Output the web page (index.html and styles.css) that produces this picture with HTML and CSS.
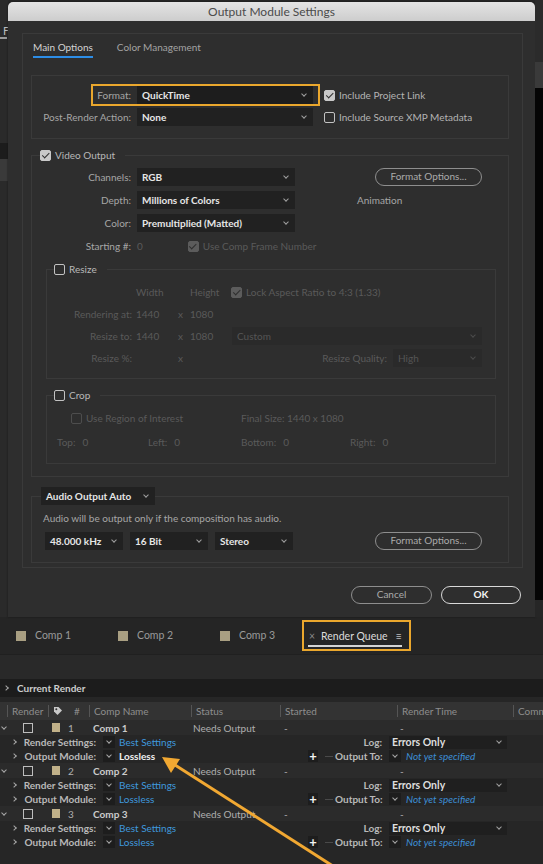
FILE: index.html
```html
<!DOCTYPE html>
<html lang="en">
<head>
    <meta charset="UTF-8">
    <meta name="viewport" content="width=device-width, initial-scale=1.0">
    <title>Output Module Settings</title>
    <link rel="stylesheet" href="styles.css">
</head>
<body>
    <div class="top">
        <div class="edge-left">
            <span class="frag-f">F</span>
            <span class="frag-block"></span>
            <span class="frag-block light"></span>
        </div>

        <div class="dialog">
            <div class="titlebar">Output Module Settings</div>
            <div class="dialog-body">
                <div class="panel">
                    <div class="tabs">
                        <span class="tab active">Main Options</span>
                        <span class="tab">Color Management</span>
                    </div>

                    <!-- format -->
                    <div class="box box-format">
                        <div class="hl"></div>
                        <div class="frow">
                            <span class="lbl">Format:</span>
                            <div class="select dark">QuickTime</div>
                            <span class="opt"><span class="cb on"></span>Include Project Link</span>
                        </div>
                        <div class="frow">
                            <span class="lbl">Post-Render Action:</span>
                            <div class="select">None</div>
                            <span class="opt"><span class="cb"></span>Include Source XMP Metadata</span>
                        </div>
                    </div>

                    <!-- video -->
                    <fieldset class="group group-video">
                        <legend><span class="cb on"></span>Video Output</legend>
                        <div class="vid-top">
                            <div class="vid-rows">
                                <div class="vrow">
                                    <span class="lbl">Channels:</span>
                                    <div class="select">RGB</div>
                                </div>
                                <div class="vrow">
                                    <span class="lbl">Depth:</span>
                                    <div class="select">Millions of Colors</div>
                                </div>
                                <div class="vrow">
                                    <span class="lbl">Color:</span>
                                    <div class="select">Premultiplied (Matted)</div>
                                </div>
                                <div class="vrow">
                                    <span class="lbl">Starting #:</span>
                                    <div class="start">
                                        <span class="off">0</span>
                                        <span class="opt off comp-frame"><span class="cb on dim"></span>Use Comp Frame Number</span>
                                    </div>
                                </div>
                            </div>
                            <div class="vid-side">
                                <div class="pill fmt">Format Options...</div>
                                <div class="anim">Animation</div>
                            </div>
                        </div>

                        <fieldset class="group group-sub">
                            <legend><span class="cb"></span>Resize</legend>
                            <div class="rgrid">
                                <span></span>
                                <span class="off">Width</span>
                                <span></span>
                                <span class="off">Height</span>
                                <span class="rest"><span class="opt off"><span class="cb on dim"></span>Lock Aspect Ratio to 4:3 (1.33)</span></span>

                                <span class="rlbl off">Rendering at:</span>
                                <span class="off">1440</span>
                                <span class="off">x</span>
                                <span class="off">1080</span>
                                <span class="rest"></span>

                                <span class="rlbl off">Resize to:</span>
                                <span class="off">1440</span>
                                <span class="off">x</span>
                                <span class="off">1080</span>
                                <span class="rest end"><span class="select off w-custom">Custom</span></span>

                                <span class="rlbl off">Resize %:</span>
                                <span></span>
                                <span class="off">x</span>
                                <span></span>
                                <span class="rest end"><span class="off">Resize Quality:</span><span class="select off w-quality">High</span></span>
                            </div>
                        </fieldset>

                        <fieldset class="group group-sub crop">
                            <legend><span class="cb"></span>Crop</legend>
                            <div class="crow1">
                                <span class="opt off"><span class="cb dim"></span>Use Region of Interest</span>
                                <span class="off">Final Size: 1440 x 1080</span>
                            </div>
                            <div class="crow2">
                                <span class="off">Top:<b>0</b></span>
                                <span class="off">Left:<b>0</b></span>
                                <span class="off">Bottom:<b>0</b></span>
                                <span class="off">Right:<b>0</b></span>
                            </div>
                        </fieldset>
                    </fieldset>

                    <!-- audio -->
                    <fieldset class="group group-audio">
                        <legend><span class="select auto">Audio Output Auto</span></legend>
                        <div class="note">Audio will be output only if the composition has audio.</div>
                        <div class="arow">
                            <div class="select w-audio">48.000 kHz</div>
                            <div class="select w-audio">16 Bit</div>
                            <div class="select w-audio">Stereo</div>
                            <div class="pill fmt">Format Options...</div>
                        </div>
                    </fieldset>
                </div>

                <div class="actions">
                    <div class="pill cancel">Cancel</div>
                    <div class="pill ok">OK</div>
                </div>
            </div>
        </div>

        <div class="edge-right"></div>
    </div>

    <!-- render queue panel -->
    <div class="tabbar">
        <span class="ctab"><i class="sw"></i>Comp 1</span>
        <span class="ctab"><i class="sw"></i>Comp 2</span>
        <span class="ctab"><i class="sw"></i>Comp 3</span>
        <span class="rq">
            <span class="rq-inner"><span class="x">×</span>Render Queue<span class="menu">≡</span></span>
        </span>
    </div>
    <div class="tl-empty"></div>
    <div class="current"><i class="tw right"></i>Current Render</div>
    <div class="qhead">
        <span></span>
        <span>Render</span>
        <span class="tagcell">
            <svg class="tag" viewBox="0 0 10 10"><path d="M1 1h4.5l3.5 3.5-4.5 4.5-3.5-3.5z" fill="#c9c9c9"/><circle cx="3.3" cy="3.3" r="1" fill="#333"/></svg>
            <span class="hash">#</span>
        </span>
        <span>Comp Name</span>
        <span>Status</span>
        <span>Started</span>
        <span>Render Time</span>
        <span class="comm">Comm</span>
    </div>

    <div class="queue">
        <div class="qrow comp">
            <span><i class="tw down"></i></span>
            <span><i class="qcb"></i></span>
            <span><i class="sw"></i></span>
            <span>1</span>
            <span class="name">Comp 1</span>
            <span>Needs Output</span>
            <span>-</span>
            <span>-</span>
        </div>
        <div class="qrow sub">
            <span class="twc"><i class="tw right"></i></span>
            <span class="slbl">Render Settings:</span>
            <span class="chevc"><i class="chev-box"></i></span>
            <span class="val link">Best Settings</span>
            <span></span>
            <span class="slbl">Log:</span>
            <span class="ctl"><span class="select qsel">Errors Only</span></span>
        </div>
        <div class="qrow sub">
            <span class="twc"><i class="tw right"></i></span>
            <span class="slbl">Output Module:</span>
            <span class="chevc"><i class="chev-box"></i></span>
            <span class="val hot">Lossless</span>
            <span class="tools"><i class="plus">+</i><i class="minus"></i></span>
            <span class="slbl">Output To:</span>
            <span class="ctl"><i class="chev-box"></i><span class="dest">Not yet specified</span></span>
        </div>

        <div class="qrow comp">
            <span><i class="tw down"></i></span>
            <span><i class="qcb"></i></span>
            <span><i class="sw"></i></span>
            <span>2</span>
            <span class="name">Comp 2</span>
            <span>Needs Output</span>
            <span>-</span>
            <span>-</span>
        </div>
        <div class="qrow sub">
            <span class="twc"><i class="tw right"></i></span>
            <span class="slbl">Render Settings:</span>
            <span class="chevc"><i class="chev-box"></i></span>
            <span class="val link">Best Settings</span>
            <span></span>
            <span class="slbl">Log:</span>
            <span class="ctl"><span class="select qsel">Errors Only</span></span>
        </div>
        <div class="qrow sub">
            <span class="twc"><i class="tw right"></i></span>
            <span class="slbl">Output Module:</span>
            <span class="chevc"><i class="chev-box"></i></span>
            <span class="val link">Lossless</span>
            <span class="tools"><i class="plus">+</i><i class="minus"></i></span>
            <span class="slbl">Output To:</span>
            <span class="ctl"><i class="chev-box"></i><span class="dest">Not yet specified</span></span>
        </div>

        <div class="qrow comp">
            <span><i class="tw down"></i></span>
            <span><i class="qcb"></i></span>
            <span><i class="sw"></i></span>
            <span>3</span>
            <span class="name">Comp 3</span>
            <span>Needs Output</span>
            <span>-</span>
            <span>-</span>
        </div>
        <div class="qrow sub">
            <span class="twc"><i class="tw right"></i></span>
            <span class="slbl">Render Settings:</span>
            <span class="chevc"><i class="chev-box"></i></span>
            <span class="val link">Best Settings</span>
            <span></span>
            <span class="slbl">Log:</span>
            <span class="ctl"><span class="select qsel">Errors Only</span></span>
        </div>
        <div class="qrow sub">
            <span class="twc"><i class="tw right"></i></span>
            <span class="slbl">Output Module:</span>
            <span class="chevc"><i class="chev-box"></i></span>
            <span class="val link">Lossless</span>
            <span class="tools"><i class="plus">+</i><i class="minus"></i></span>
            <span class="slbl">Output To:</span>
            <span class="ctl"><i class="chev-box"></i><span class="dest">Not yet specified</span></span>
        </div>
    </div>

    <!-- callout arrow -->
    <svg class="arrow" viewBox="0 0 543 164" width="543" height="164">
        <line x1="175" y1="65" x2="336" y2="168" stroke="#f1a832" stroke-width="3"/>
        <polygon points="162,57 180,59 171,73" fill="#f1a832"/>
    </svg>
</body>
</html>
```

FILE: styles.css
```css
body {
    margin: 0;
    width: 543px;
    height: 864px;
    overflow: hidden;
    position: relative;
    background: #262626;
    font-family: Lato, "Open Sans", sans-serif;
    font-size: 10px;
    color: #a6a6a6;
}
i { font-style: normal; }

/* top area with the floating dialog */
.top {
    display: flex;
    height: 617px;
}
.edge-left {
    width: 8px;
    background: #2a2a2a;
    display: flex;
    flex-direction: column;
    overflow: hidden;
}
.frag-f {
    margin-top: 24px;
    padding-left: 3px;
    color: #bdbdbd;
    font-size: 11px;
    border-bottom: 2px solid #9a9a9a;
    width: 4px;
}
.frag-block {
    margin-top: 104px;
    height: 16px;
    background: #1c1c1c;
}
.frag-block.light {
    margin-top: 0;
    height: 22px;
    background: #3a3a3a;
}
.edge-right {
    flex: 1;
    background: linear-gradient(#2b2b2b 0 62px, #3a3a3a 62px 88px, #050505 88px 600px, #262626 600px);
}
.dialog {
    width: 527px;
    height: 615px;
    margin-top: 2px;
    background: #2e2e2e;
    border-radius: 5px 5px 0 0;
    display: flex;
    flex-direction: column;
    box-shadow: 0 0 2px #151515;
}
.titlebar {
    height: 19px;
    line-height: 19px;
    background: linear-gradient(#e4e4e4, #cdcdcd);
    border-radius: 5px 5px 0 0;
    color: #4b4b4b;
    font-size: 12px;
    text-align: center;
}
.dialog-body {
    flex: 1;
    padding: 12px 12px 0 14px;
}
.panel {
    border: 1px solid #3a3a3a;
    padding: 0 13px 4px 8px;
}
.tabs {
    padding-top: 7px;
    display: flex;
    gap: 24px;
    line-height: 13px;
}
.tab {
    color: #a3a3a3;
    padding-bottom: 2px;
}
.tab.active {
    margin-left: 2px;
    color: #d4d4d4;
    border-bottom: 2px solid #2d8de6;
}

/* shared controls */
.lbl {
    text-align: right;
    line-height: 18px;
}
.select {
    position: relative;
    display: block;
    height: 18px;
    line-height: 18px;
    box-sizing: border-box;
    padding-left: 5px;
    background: #212121;
    color: #e6e6e6;
    font-weight: 700;
    white-space: nowrap;
}
.select::after {
    content: "";
    position: absolute;
    right: 7px;
    top: 6px;
    width: 3px;
    height: 3px;
    border-right: 1px solid #a0a0a0;
    border-bottom: 1px solid #a0a0a0;
    transform: rotate(45deg);
}
.select.dark { background: #1d1d1d; }
.select.off {
    background: #2a2a2a;
    color: #555;
    font-weight: 400;
}
.select.off::after { border-color: #4c4c4c; }
.off { color: #5a5a5a; }
.opt {
    display: inline-flex;
    align-items: center;
    gap: 4px;
    color: #b4b4b4;
    white-space: nowrap;
}
.opt.off { color: #5a5a5a; }
.cb {
    position: relative;
    display: inline-block;
    width: 11px;
    height: 11px;
    box-sizing: border-box;
    border: 1.5px solid #c2c2c2;
    border-radius: 2px;
    flex: none;
}
.cb.on {
    background: #c9c9c9;
    border-color: #c9c9c9;
}
.cb.on::after {
    content: "";
    position: absolute;
    left: 2.5px;
    top: 0;
    width: 2.5px;
    height: 5.5px;
    border-right: 1.5px solid #303030;
    border-bottom: 1.5px solid #303030;
    transform: rotate(45deg);
}
.cb.dim { border-color: #4d4d4d; }
.cb.dim.on { background: #5c5c5c; border-color: #5c5c5c; }
.cb.dim.on::after { border-color: #2f2f2f; }
.pill {
    height: 18px;
    line-height: 15px;
    box-sizing: border-box;
    border: 1.5px solid #8e8e8e;
    border-radius: 10px;
    text-align: center;
    color: #ababab;
}

/* format box */
.box {
    position: relative;
    margin-top: 17px;
    border: 1px solid #3a3a3a;
    padding: 10px 0 12px;
    display: flex;
    flex-direction: column;
    gap: 4px;
}
.hl {
    position: absolute;
    left: 59px;
    top: 8px;
    width: 229px;
    height: 22px;
    box-sizing: border-box;
    border: 2px solid #eaa72d;
}
.frow {
    display: grid;
    grid-template-columns: 99px 176px auto;
    column-gap: 6px;
    align-items: center;
}
.frow .opt { margin-left: 5px; }

/* groups */
fieldset.group {
    margin: 10px 0 0;
    padding: 0;
    border: 1px solid #3a3a3a;
    min-width: 0;
}
fieldset.group legend {
    margin-left: 8px;
    padding: 0 10px 0 0;
    display: flex;
    align-items: center;
    gap: 4px;
    line-height: 13px;
    color: #b8b8b8;
}
.vid-top {
    display: flex;
    padding-top: 6px;
}
.vid-rows {
    display: flex;
    flex-direction: column;
    gap: 5px;
}
.vrow {
    display: grid;
    grid-template-columns: 99px 158px;
    column-gap: 6px;
    align-items: center;
}
.start {
    display: flex;
    align-items: center;
    line-height: 18px;
}
.comp-frame { margin-left: 45px; }
.vid-side {
    margin-left: 62px;
    display: flex;
    flex-direction: column;
}
.fmt {
    width: 107px;
    margin-left: 18px;
}
.anim {
    margin-top: 5px;
    line-height: 18px;
}

.group-sub {
    margin: 8px 12px 0 14px !important;
    padding: 7px 0 11px !important;
}
.group-sub legend { margin-left: 7px !important; }
.rgrid {
    display: grid;
    grid-template-columns: 89px 42px 12px 41px 1fr;
    grid-auto-rows: 18px;
    row-gap: 4px;
    align-items: center;
}
.rlbl {
    text-align: right;
    padding-right: 4px;
}
.rest {
    display: flex;
    align-items: center;
    padding-right: 13px;
}
.rest.end { justify-content: flex-end; }
.w-custom { width: 250px; }
.w-quality { width: 89px; margin-left: 6px; }

.crop {
    margin-top: 10px !important;
    padding-bottom: 12px !important;
}
.crow1 {
    display: grid;
    grid-template-columns: 170px 1fr;
    padding-left: 24px;
    height: 18px;
    align-items: center;
}
.crow2 {
    display: grid;
    grid-template-columns: 91px 93px 109px 1fr;
    padding-left: 10px;
    margin-top: 6px;
    height: 18px;
    align-items: center;
}
.crow2 b {
    font-weight: 400;
    margin-left: 7px;
}
.group-video { padding-bottom: 12px !important; }

.group-audio { padding: 0 0 12px !important; }
.group-audio legend {
    margin-left: 9px !important;
    padding: 0 !important;
}
.select.auto {
    width: 114px;
    background: #212121;
}
.note {
    padding: 7px 0 0 11px;
    line-height: 13px;
}
.arow {
    display: flex;
    gap: 7px;
    margin-top: 7px;
    padding-left: 13px;
}
.w-audio { width: 78px; }
.arow .fmt { margin-left: 75px; }

.actions {
    display: flex;
    justify-content: flex-end;
    gap: 9px;
    margin-top: 18px;
    padding-right: 2px;
}
.cancel { width: 81px; }
.ok {
    width: 80px;
    border-color: #d9d9d9;
    color: #f2f2f2;
    font-weight: 700;
}

/* render queue panel */
.tabbar {
    height: 37px;
    display: flex;
    align-items: center;
    background: #252525;
    padding-left: 16px;
    line-height: 13px;
}
.ctab {
    display: flex;
    align-items: center;
    gap: 9px;
    width: 102px;
    color: #9a9a9a;
    font-size: 10.5px;
}
.ctab:nth-child(3) { width: 82px; }
.ctab .sw {
    width: 10px;
    height: 10px;
    background: #a99f82;
}
.rq {
    height: 31px;
    box-sizing: border-box;
    border: 2px solid #eaa72d;
    padding: 0 7px 0 4px;
    display: flex;
    align-items: center;
}
.rq-inner {
    display: flex;
    align-items: center;
    padding: 5px 0 2px;
    border-bottom: 2px solid #d4d4d4;
    color: #dcdcdc;
    font-size: 10.5px;
}
.rq .x {
    color: #8a8a8a;
    margin: 0 6px 0 1px;
}
.rq .menu {
    margin-left: 8px;
    color: #bdbdbd;
}
.tl-empty {
    height: 25px;
    background: #292929;
    border-top: 1px solid #202020;
    box-sizing: border-box;
}
.current {
    height: 18px;
    background: #1c1c1c;
    display: flex;
    align-items: center;
    color: #cdcdcd;
    font-weight: 700;
    margin-bottom: 5px;
}
.current .tw { margin: 0 9px 0 4px; }
.tw {
    display: inline-block;
    width: 3px;
    height: 3px;
    border-right: 1px solid #a8a8a8;
    border-bottom: 1px solid #a8a8a8;
}
.tw.right { transform: rotate(-45deg); }
.tw.down { transform: rotate(45deg); margin: 0 0 3px 2px; }

.qhead {
    height: 18px;
    background: #333;
    display: grid;
    grid-template-columns: 7px 41px 41px 102px 89px 117px 116px 1fr;
    align-items: center;
    color: #8e8e8e;
    white-space: nowrap;
    overflow: hidden;
}
.qhead > span {
    border-left: 1px solid #555;
    padding-left: 4px;
    line-height: 12px;
}
.qhead > span:first-child { border-left: none; }
.tagcell {
    display: flex;
    align-items: center;
}
.tag { width: 10px; height: 10px; }
.hash { margin-left: 11px; }

.qrow {
    display: grid;
    align-items: center;
    white-space: nowrap;
}
.qrow.comp {
    height: 15px;
    background: #2b2b2b;
    grid-template-columns: 23px 29px 16px 25px 100px 91px 116px 1fr;
    color: #afafaf;
}
.qrow.comp .name {
    color: #cbcbcb;
    font-weight: 700;
}
.qcb {
    display: block;
    width: 10px;
    height: 10px;
    box-sizing: border-box;
    border: 1.5px solid #bdbdbd;
}
.qrow .sw {
    display: block;
    width: 8px;
    height: 9px;
    background: #c1b189;
}
.qrow.sub {
    height: 14px;
    background: #262626;
    grid-template-columns: 21px 75px 19px 185px 35px 47px 125px;
}
.twc {
    display: flex;
    justify-content: flex-end;
    padding-right: 5px;
}
.slbl {
    text-align: right;
    color: #b9b9b9;
    font-weight: 700;
}
.chevc {
    display: flex;
    justify-content: flex-end;
}
.chev-box {
    position: relative;
    display: block;
    width: 12px;
    height: 12px;
    background: #1d1d1d;
}
.chev-box::after {
    content: "";
    position: absolute;
    left: 4px;
    top: 3px;
    width: 3px;
    height: 3px;
    border-right: 1px solid #a8a8a8;
    border-bottom: 1px solid #a8a8a8;
    transform: rotate(45deg);
}
.val { padding-left: 4px; }
.link { color: #3f98dd; }
.hot {
    color: #f0f0f0;
    font-weight: 700;
}
.tools {
    display: flex;
    align-items: center;
    padding-left: 8px;
}
.plus {
    width: 10px;
    height: 12px;
    line-height: 12px;
    text-align: center;
    background: #1d1d1d;
    color: #f2f2f2;
    font-weight: 700;
    font-size: 13px;
}
.minus {
    width: 8px;
    height: 1px;
    margin-left: 7px;
    background: #4a4a4a;
}
.ctl {
    display: flex;
    align-items: center;
    padding-left: 7px;
}
.qsel {
    width: 118px;
    height: 13px;
    line-height: 13px;
    padding-left: 3px;
    background: #1f1f1f;
    color: #dedede;
    font-size: 10.5px;
}
.qsel::after { top: 3px; right: 6px; }
.dest {
    margin-left: 5px;
    color: #3d8fd6;
    font-style: italic;
}

.arrow {
    position: absolute;
    left: 0;
    top: 700px;
}
```
